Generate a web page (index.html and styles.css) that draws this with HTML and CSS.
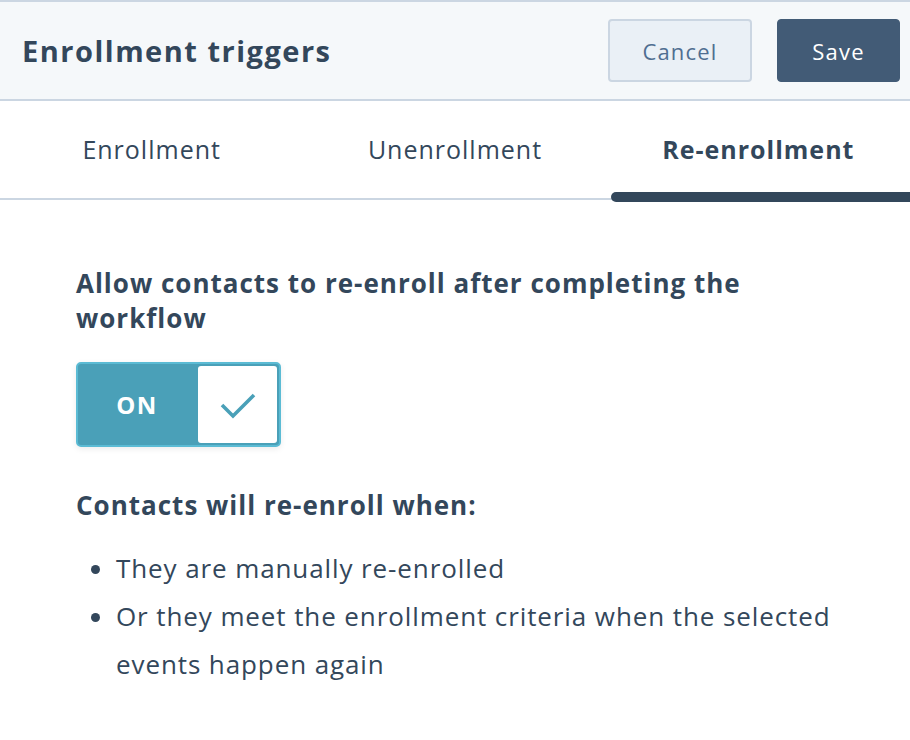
FILE: index.html
```html
<!DOCTYPE html>
<html>
<head>
<meta charset="utf-8">
<link rel="stylesheet" href="styles.css">
</head>
<body>
<div class="panel">
  <header class="header">
    <h1 class="title">Enrollment triggers</h1>
    <div class="actions">
      <button class="btn btn-secondary">Cancel</button>
      <button class="btn btn-primary">Save</button>
    </div>
  </header>
  <nav class="tabs">
    <div class="tab">Enrollment</div>
    <div class="tab">Unenrollment</div>
    <div class="tab tab-active">Re-enrollment</div>
  </nav>
  <main class="content">
    <h2 class="heading">Allow contacts to re-enroll after completing the workflow</h2>
    <div class="toggle">
      <span class="toggle-label">ON</span>
      <span class="toggle-knob">
        <svg width="40" height="30" viewBox="0 0 40 30"><path d="M4 15 L15 26 L36 5" fill="none" stroke="#4aa0b8" stroke-width="3.6"/></svg>
      </span>
    </div>
    <h3 class="subheading">Contacts will re-enroll when:</h3>
    <ul class="list">
      <li>They are manually re-enrolled</li>
      <li>Or they meet the enrollment criteria when the selected events happen again</li>
    </ul>
  </main>
</div>
</body>
</html>
```
FILE: styles.css
```css
* { box-sizing: border-box; }
html, body { margin: 0; padding: 0; background: #fff; }
body { font-family: "Open Sans", "Lato", sans-serif; color: #33475b; width: 910px; height: 740px; overflow: hidden; }
.panel { border-top: 2px solid #cbd6e2; }
.header {
  height: 99px; background: #f5f8fa; border-bottom: 2px solid #cbd6e2;
  display: flex; align-items: center; justify-content: space-between;
  padding: 0 10px 0 22px;
}
.title { margin: 0; font-size: 29px; font-weight: 700; letter-spacing: 1.5px; }
.actions { display: flex; gap: 25px; align-items: center; }
.btn { height: 63px; border-radius: 4px; font-family: inherit; font-size: 22px; letter-spacing: 1.2px; padding: 0; }
.btn-secondary { width: 144px; background: #eaf0f6; border: 2px solid #cbd6e2; color: #506e91; }
.btn-primary { width: 123px; background: #425b76; border: 1px solid #425b76; color: #fff; }
.tabs { display: flex; height: 99px; border-bottom: 2px solid #cbd6e2; }
.tab { flex: 1; display: flex; align-items: center; justify-content: center; font-size: 25px; letter-spacing: 1px; padding-bottom: 2px; position: relative; }
.tab-active { font-weight: 700; }
.tab-active::after {
  content: ""; position: absolute; left: 4px; right: 0; bottom: -4px; height: 10px;
  background: #33475b; border-radius: 5px 0 0 5px;
}
.content { padding: 66px 76px 0 76px; }
.heading { margin: 0; font-size: 26px; font-weight: 700; letter-spacing: 1px; line-height: 35px; max-width: 720px; }
.toggle {
  margin-top: 26px; display: flex; width: 205px; height: 85px;
  border: 2px solid #5bbbd4; border-radius: 5px; background: #4aa0b8; overflow: hidden;
  box-shadow: 0 2px 6px rgba(0,0,0,0.08);
}
.toggle-label { flex: 1; display: flex; align-items: center; justify-content: center; color: #fff; font-weight: 700; font-size: 24px; letter-spacing: 1.5px; }
.toggle-knob { width: 83px; background: #fff; border: 2px solid #4aa0b8; border-radius: 5px; display: flex; align-items: center; justify-content: center; }
.subheading { margin: 41px 0 0 0; font-size: 26px; font-weight: 700; letter-spacing: 1px; line-height: 35px; }
.list { margin: 21px 0 0 0; padding-left: 40px; font-size: 26px; letter-spacing: 0.9px; line-height: 48px; }
.list li { padding-left: 0; }
```
